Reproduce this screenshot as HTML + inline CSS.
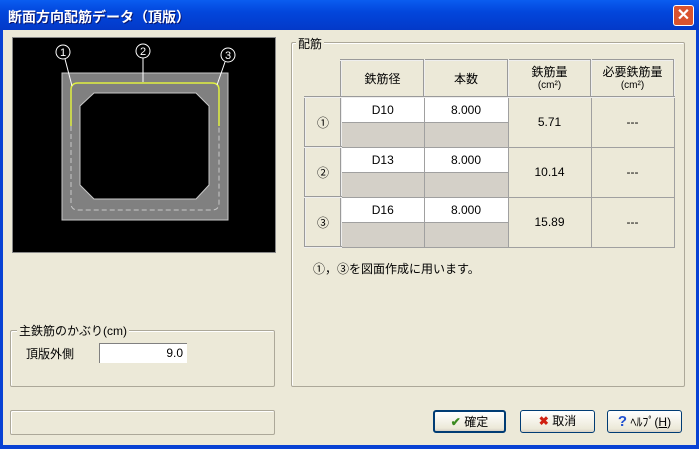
<!DOCTYPE html><html><head><meta charset="utf-8"><style>
*{margin:0;padding:0;box-sizing:border-box}
body{width:699px;height:449px;background:#0842d4;position:relative;overflow:hidden;font:12px "Liberation Sans","Noto Sans CJK JP",sans-serif;color:#000}
.a{position:absolute}
#title{left:0;top:0;width:699px;height:30px;background:linear-gradient(#0a5df0,#0246dc 40%,#0339c8);color:#fff;font-weight:bold;font-size:14px;padding:7px 8px;text-shadow:1px 1px #0a1870}
#body{left:3px;top:30px;width:693px;height:415px;background:#ece9d8}
.grp{border:1px solid #aca899;border-radius:2px;box-shadow:inset 1px 1px #fff}
.lbl{background:#ece9d8;padding:0 2px}
table{border-collapse:collapse;position:absolute;left:304px;top:59px}
td{border:1px solid #a0a0a0;text-align:center;font-size:12px}
.h{border:2px outset #eee}
.btn{border:1px solid #003c74;border-radius:3px;background:linear-gradient(#fff,#ece9d8 85%,#d6d0c5);text-align:center;line-height:21px;height:23px}
</style></head><body>
<div id="title" class="a">断面方向配筋データ（頂版）</div>
<div class="a" style="left:673px;top:5px;width:21px;height:21px;background:#d9532f;border:1px solid #fff;border-radius:3px;color:#fff;font-weight:bold;text-align:center;line-height:19px;font-size:16px">✕</div>
<div id="body" class="a"></div>
<div class="a" style="left:12px;top:37px;width:264px;height:216px;background:#000;border:1px solid #888"></div>
<svg class="a" style="left:0;top:0" width="300" height="260">
<rect x="62" y="73" width="166" height="147" fill="#808080" stroke="#c8c8c8"/>
<polygon points="94,93 196,93 209,106 209,185 196,199 94,199 80,185 80,106" fill="#000" stroke="#c8c8c8"/>
<path d="M71,126 V90 Q71,83 78,83 H212 Q219,83 219,90 V126" fill="none" stroke="#e0f040" stroke-width="1.5"/>
<path d="M71,126 V203 Q71,210 78,210 H212 Q219,210 219,203 V126" fill="none" stroke="#c8c8c8" stroke-dasharray="5,3"/>
<g stroke="#fff" fill="none"><circle cx="63" cy="52" r="7"/><circle cx="143" cy="51" r="7"/><circle cx="228" cy="55" r="7"/><path d="M65,59 L72,86 M143,58 V82 M225,62 L217,85"/></g>
<g fill="#fff" font-size="11" text-anchor="middle" font-family="Liberation Sans"><text x="63" y="56">1</text><text x="143" y="55">2</text><text x="228" y="59">3</text></g>
</svg>
<div class="a grp" style="left:10px;top:330px;width:265px;height:57px"></div>
<div class="a lbl" style="left:17px;top:322px">主鉄筋のかぶり(cm)</div>
<div class="a" style="left:26px;top:345px">頂版外側</div>
<div class="a" style="left:99px;top:343px;width:88px;height:20px;background:#fff;border-top:1px solid #808080;border-left:1px solid #808080;text-align:right;padding:2px 4px">9.0</div>
<div class="a grp" style="left:10px;top:410px;width:265px;height:25px"></div>
<div class="a grp" style="left:291px;top:42px;width:394px;height:345px"></div>
<div class="a lbl" style="left:296px;top:35px">配筋</div>
<table>
<tr style="height:37px"><td style="border:none;width:36px"></td><td class="h" style="width:83px">鉄筋径</td><td class="h" style="width:84px">本数</td><td class="h" style="width:83px;line-height:12px">鉄筋量<br><span style="font-size:10px">(cm²)</span></td><td class="h" style="width:83px;line-height:12px">必要鉄筋量<br><span style="font-size:10px">(cm²)</span></td></tr>
<tr style="height:25px"><td rowspan="2" class="h">①</td><td style="background:#fff">D10</td><td style="background:#fff">8.000</td><td rowspan="2">5.71</td><td rowspan="2">---</td></tr>
<tr style="height:25px"><td style="background:#d4d0c8"></td><td style="background:#d4d0c8"></td></tr>
<tr style="height:25px"><td rowspan="2" class="h">②</td><td style="background:#fff">D13</td><td style="background:#fff">8.000</td><td rowspan="2">10.14</td><td rowspan="2">---</td></tr>
<tr style="height:25px"><td style="background:#d4d0c8"></td><td style="background:#d4d0c8"></td></tr>
<tr style="height:25px"><td rowspan="2" class="h">③</td><td style="background:#fff">D16</td><td style="background:#fff">8.000</td><td rowspan="2">15.89</td><td rowspan="2">---</td></tr>
<tr style="height:25px"><td style="background:#d4d0c8"></td><td style="background:#d4d0c8"></td></tr>
</table>
<div class="a" style="left:313px;top:260px">①，③を図面作成に用います。</div>
<div class="a btn" style="left:433px;top:410px;width:73px;border-width:2px"><span style="color:#3a8a20;font-weight:bold">✔</span> 確定</div>
<div class="a btn" style="left:520px;top:410px;width:75px"><span style="color:#d02010;font-weight:bold">✖</span> 取消</div>
<div class="a btn" style="left:607px;top:410px;width:75px"><span style="color:#2050d0;font-weight:bold;font-size:15px">?</span> ﾍﾙﾌﾟ(<u>H</u>)</div>
</body></html>
